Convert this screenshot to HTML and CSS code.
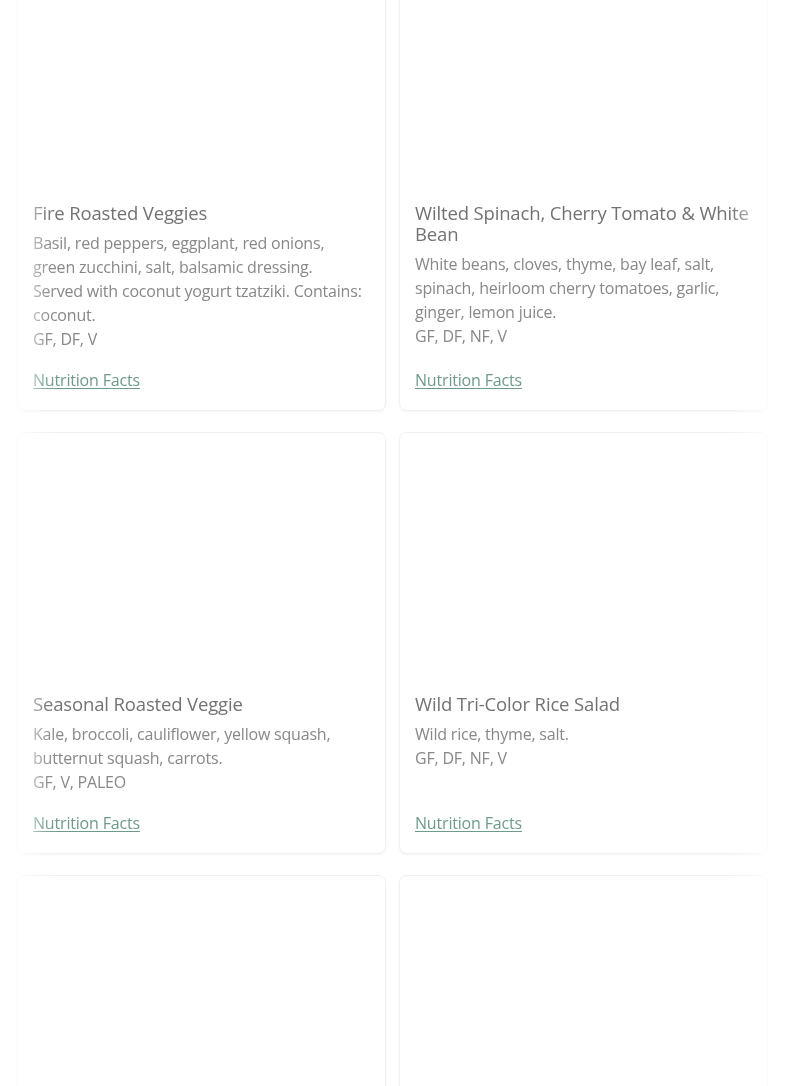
FILE: index.html
```html
<!DOCTYPE html>
<html lang="en">
<head>
<meta charset="utf-8">
<title>Menu</title>
<link rel="stylesheet" href="styles.css">
</head>
<body>
<div class="menu">
  <div class="grid">
    <article class="card">
      <div class="photo"></div>
      <div class="body">
        <h3 class="title">Fire Roasted Veggies</h3>
        <p class="desc">Basil, red peppers, eggplant, red onions,<br>green zucchini, salt, balsamic dressing.<br>Served with coconut yogurt tzatziki. Contains: coconut.</p>
        <p class="tags">GF, DF, V</p>
        <a class="link" href="#">Nutrition Facts</a>
      </div>
    </article>
    <article class="card">
      <div class="photo"></div>
      <div class="body">
        <h3 class="title">Wilted Spinach, Cherry Tomato &amp; White Bean</h3>
        <p class="desc">White beans, cloves, thyme, bay leaf, salt, spinach, heirloom cherry tomatoes, garlic, ginger, lemon juice.</p>
        <p class="tags">GF, DF, NF, V</p>
        <a class="link" href="#">Nutrition Facts</a>
      </div>
    </article>
    <article class="card">
      <div class="photo"></div>
      <div class="body">
        <h3 class="title">Seasonal Roasted Veggie</h3>
        <p class="desc">Kale, broccoli, cauliflower, yellow squash, butternut squash, carrots.</p>
        <p class="tags">GF, V, PALEO</p>
        <a class="link" href="#">Nutrition Facts</a>
      </div>
    </article>
    <article class="card">
      <div class="photo"></div>
      <div class="body">
        <h3 class="title">Wild Tri-Color Rice Salad</h3>
        <p class="desc">Wild rice, thyme, salt.</p>
        <p class="tags">GF, DF, NF, V</p>
        <a class="link" href="#">Nutrition Facts</a>
      </div>
    </article>
    <article class="card">
      <div class="photo"></div>
      <div class="body"></div>
    </article>
    <article class="card">
      <div class="photo"></div>
      <div class="body"></div>
    </article>
  </div>
</div>
</body>
</html>
```
FILE: styles.css
```css
html, body {
  margin: 0;
  padding: 0;
  background: #ffffff;
  overflow: hidden;
}

body {
  font-family: "Open Sans", "Lato", sans-serif;
  color: #7a7a7a;
}

.menu {
  height: 1086px;
  overflow: hidden;
  -webkit-mask-image: linear-gradient(to right, rgba(0,0,0,0.25) 17px, rgba(0,0,0,0.55) 33px, rgba(0,0,0,0.9) 46px, #000 58px, #000 730px, rgba(0,0,0,0.55) 750px, rgba(0,0,0,0.25) 768px);
  mask-image: linear-gradient(to right, rgba(0,0,0,0.25) 17px, rgba(0,0,0,0.55) 33px, rgba(0,0,0,0.9) 46px, #000 58px, #000 730px, rgba(0,0,0,0.55) 750px, rgba(0,0,0,0.25) 768px);
}

.grid {
  display: grid;
  grid-template-columns: 1fr 1fr;
  column-gap: 13px;
  row-gap: 21px;
  padding: 0 17px;
  margin-top: -59px;
}

.card {
  display: flex;
  flex-direction: column;
  background: #fff;
  border: 1px solid #f0f0f0;
  border-radius: 8px;
  box-shadow: 0 1px 3px rgba(0, 0, 0, 0.05);
  overflow: hidden;
}

.photo {
  height: 244px;
  background: #fff;
}

.body {
  flex: 1;
  display: flex;
  flex-direction: column;
  padding: 16px 13px 18px 15px;
}

.title {
  margin: 0 0 8px;
  font-size: 18.5px;
  line-height: 21px;
  font-weight: 400;
  letter-spacing: -0.15px;
  color: #727272;
}

.desc,
.tags {
  margin: 0;
  font-size: 16px;
  line-height: 24px;
  letter-spacing: -0.2px;
  color: #888888;
}

.link {
  margin-top: auto;
  padding-top: 17px;
  font-size: 16px;
  line-height: 24px;
  letter-spacing: -0.18px;
  color: #6e9a8c;
  text-decoration: underline;
  text-underline-offset: 2px;
  align-self: flex-start;
}
```
